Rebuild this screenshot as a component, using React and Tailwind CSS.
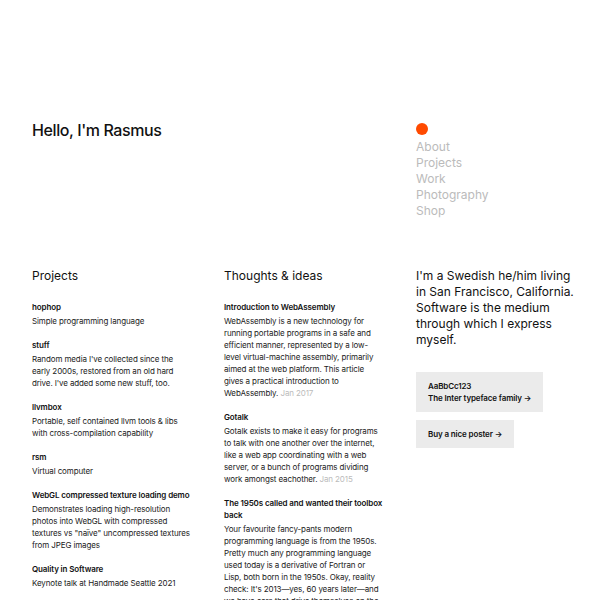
import React from 'react';

const projects = [
  { title: 'hophop', text: 'Simple programming language' },
  { title: 'stuff', text: "Random media I've collected since the early 2000s, restored from an old hard drive. I've added some new stuff, too." },
  { title: 'llvmbox', text: 'Portable, self contained llvm tools & libs with cross-compilation capability' },
  { title: 'rsm', text: 'Virtual computer' },
  { title: 'WebGL compressed texture loading demo', text: 'Demonstrates loading high-resolution photos into WebGL with compressed textures vs "naïve" uncompressed textures from JPEG images' },
  { title: 'Quality in Software', text: 'Keynote talk at Handmade Seattle 2021' },
];

const thoughts = [
  {
    title: 'Introduction to WebAssembly',
    text: 'WebAssembly is a new technology for running portable programs in a safe and efficient manner, represented by a low-level virtual-machine assembly, primarily aimed at the web platform. This article gives a practical introduction to WebAssembly.',
    date: 'Jan 2017',
  },
  {
    title: 'Gotalk',
    text: 'Gotalk exists to make it easy for programs to talk with one another over the internet, like a web app coordinating with a web server, or a bunch of programs dividing work amongst eachother.',
    date: 'Jan 2015',
  },
  {
    title: 'The 1950s called and wanted their toolbox back',
    text: "Your favourite fancy-pants modern programming language is from the 1950s. Pretty much any programming language used today is a derivative of Fortran or Lisp, both born in the 1950s. Okay, reality check: It's 2013—yes, 60 years later—and we have cars that drive themselves on the streets and computers in our pockets.",
  },
];

const navItems = ['About', 'Projects', 'Work', 'Photography', 'Shop'];

function Entry({ title, text, date }) {
  return (
    <div className="flex flex-col gap-[2px]">
      <h3 className="text-[8px] leading-[12px] font-semibold tracking-[-0.015em] text-[#111]">{title}</h3>
      <p className="text-[8px] leading-[12px] tracking-[-0.015em] text-[#222]">
        {text}
        {date && <span className="text-[#bbb]"> {date}</span>}
      </p>
    </div>
  );
}

export default function App() {
  return (
    <div
      className="h-[600px] overflow-hidden bg-white pt-[120px] pl-[32px]"
      style={{ fontFamily: 'Inter, "Noto Sans", sans-serif' }}
    >
      <div className="grid grid-cols-[160px_160px_160px] gap-x-[32px]">
        <h1 className="text-[16px] leading-[20px] font-medium tracking-[-0.025em] text-[#111]">Hello, I'm Rasmus</h1>
        <div />
        <nav className="flex flex-col">
          <span className="mt-[3px] mb-[4px] block h-[12px] w-[12px] rounded-full bg-[#ff4a00]" />
          {navItems.map((item) => (
            <a key={item} className="text-[12px] leading-[16px] text-[#bbb]">
              {item}
            </a>
          ))}
        </nav>

        <section className="mt-[49px]">
          <h2 className="text-[12px] leading-[16px] text-[#111]">Projects</h2>
          <div className="mt-[17px] flex flex-col gap-[12px]">
            {projects.map((p) => (
              <Entry key={p.title} {...p} />
            ))}
          </div>
        </section>

        <section className="mt-[49px]">
          <h2 className="text-[12px] leading-[16px] text-[#111]">Thoughts &amp; ideas</h2>
          <div className="mt-[17px] flex flex-col gap-[12px]">
            {thoughts.map((t) => (
              <Entry key={t.title} {...t} />
            ))}
          </div>
        </section>

        <section className="mt-[49px]">
          <p className="text-[12px] leading-[16px] text-[#111]">
            I'm a Swedish he/him living in San Francisco, California. Software is the medium through which I express myself.
          </p>
          <div className="mt-[24px] flex flex-col items-start gap-[8px]">
            <a className="bg-[#ebebeb] px-[12px] py-[8px] text-[8px] leading-[12px] font-semibold tracking-[-0.015em] text-[#111]">
              AaBbCc123
              <br />
              The Inter typeface family →
            </a>
            <a className="bg-[#ebebeb] px-[12px] py-[8px] text-[8px] leading-[12px] font-semibold tracking-[-0.015em] text-[#111]">
              Buy a nice poster →
            </a>
          </div>
        </section>
      </div>
    </div>
  );
}
